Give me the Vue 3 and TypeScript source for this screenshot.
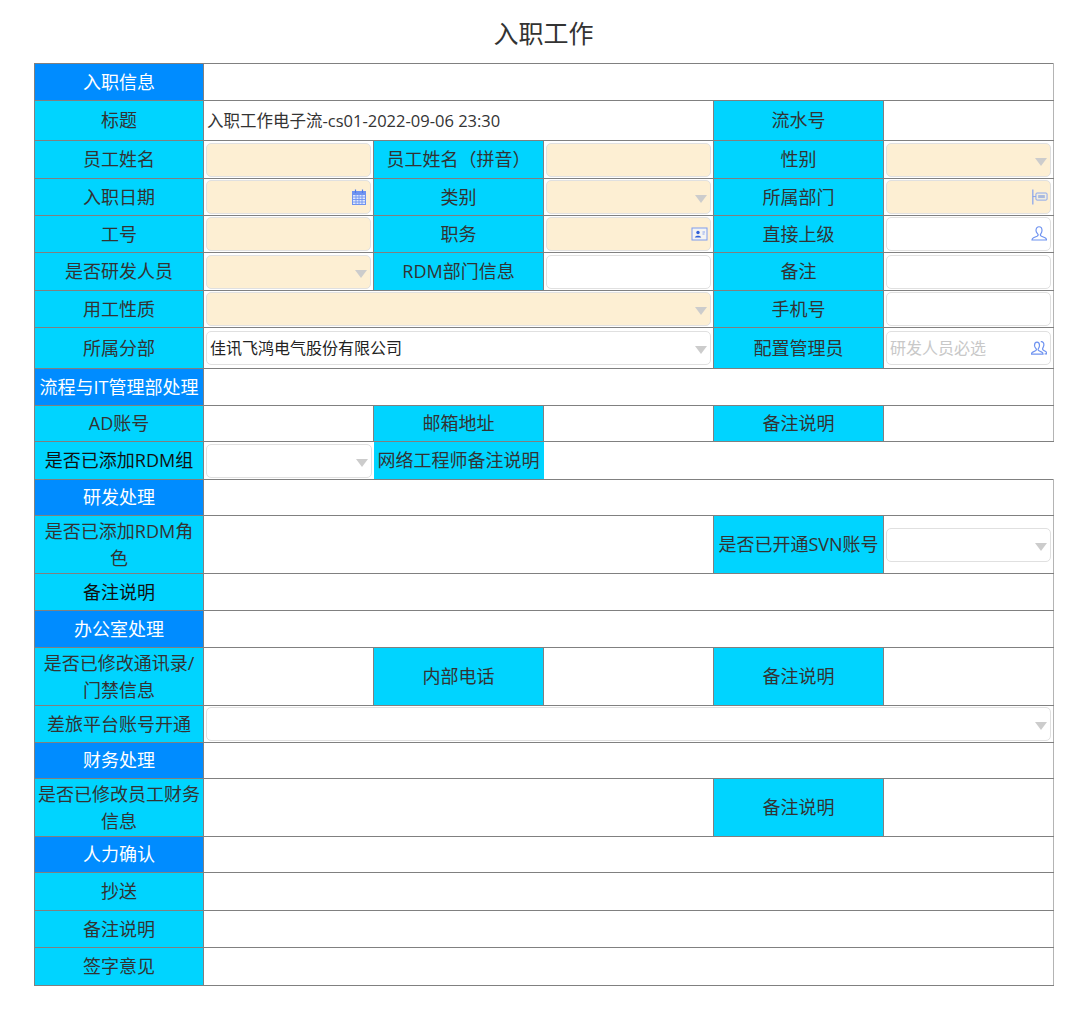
<script setup lang="ts">
type Icon = 'cal' | 'org' | 'card' | 'user' | 'users'
interface Cell {
  kind: 'head' | 'label' | 'text' | 'empty' | 'input' | 'select' | 'note'
  text?: string
  span?: number
  fill?: boolean
  icon?: Icon
  placeholder?: string
  strong?: boolean
  bare?: boolean
}
interface Row { h: number; cells: Cell[] }

const L = (text: string, strong = false): Cell => ({ kind: 'label', text, strong })
const H = (text: string): Cell => ({ kind: 'head', text })
const E = (span = 1): Cell => ({ kind: 'empty', span })
const I = (fill = false, icon?: Icon, placeholder?: string): Cell => ({ kind: 'input', fill, icon, placeholder })
const S = (fill = false, span = 1, text?: string): Cell => ({ kind: 'select', fill, span, text })

const rows: Row[] = [
  { h: 37, cells: [H('入职信息'), E(5)] },
  { h: 40, cells: [L('标题'), { kind: 'text', span: 3, text: '入职工作电子流-cs01-2022-09-06 23:30' }, L('流水号'), E()] },
  { h: 38, cells: [L('员工姓名'), I(true), L('员工姓名（拼音）'), I(true), L('性别'), S(true)] },
  { h: 37, cells: [L('入职日期'), I(true, 'cal'), L('类别'), S(true), L('所属部门'), I(true, 'org')] },
  { h: 37, cells: [L('工号'), I(true), L('职务'), I(true, 'card'), L('直接上级'), I(false, 'user')] },
  { h: 38, cells: [L('是否研发人员'), S(true), L('RDM部门信息'), I(), L('备注'), I()] },
  { h: 37, cells: [L('用工性质'), S(true, 3), L('手机号'), I()] },
  { h: 41, cells: [L('所属分部'), S(false, 3, '佳讯飞鸿电气股份有限公司'), L('配置管理员'), I(false, 'users', '研发人员必选')] },
  { h: 37, cells: [H('流程与IT管理部处理'), E(5)] },
  { h: 36, cells: [L('AD账号'), E(), L('邮箱地址'), E(), L('备注说明'), E()] },
  { h: 38, cells: [L('是否已添加RDM组', true), S(), { kind: 'note', text: '网络工程师备注说明' }] },
  { h: 36, cells: [H('研发处理'), E(5)] },
  { h: 58, cells: [L('是否已添加RDM角色'), E(3), { kind: 'label', text: '是否已开通SVN账号', bare: true }, S()] },
  { h: 37, cells: [L('备注说明', true), E(5)] },
  { h: 37, cells: [H('办公室处理'), E(5)] },
  { h: 58, cells: [L('是否已修改通讯录/门禁信息'), E(), L('内部电话'), E(), L('备注说明'), E()] },
  { h: 37, cells: [L('差旅平台账号开通'), S(false, 5)] },
  { h: 36, cells: [H('财务处理'), E(5)] },
  { h: 58, cells: [L('是否已修改员工财务信息'), E(3), L('备注说明'), E()] },
  { h: 36, cells: [H('人力确认'), E(5)] },
  { h: 38, cells: [L('抄送'), E(5)] },
  { h: 37, cells: [L('备注说明'), E(5)] },
  { h: 38, cells: [L('签字意见'), E(5)] },
]
</script>

<template>
  <div class="page">
    <h1 class="title">入职工作</h1>
    <table class="sheet">
      <colgroup>
        <col class="col first" /><col class="col" /><col class="col" /><col class="col" /><col class="col" /><col class="col" />
      </colgroup>
      <tbody>
        <tr v-for="(row, i) in rows" :key="i" :style="{ height: row.h + 'px' }">
          <td
            v-for="(cell, j) in row.cells"
            :key="j"
            :colspan="cell.span || 1"
            :class="['c-' + cell.kind, { strong: cell.strong, bare: cell.bare, open: row.cells.length === 3 && j === 1 }]"
          >
            <template v-if="cell.kind === 'input' || cell.kind === 'select'">
              <div class="field" :class="{ fill: cell.fill }">
                <span v-if="cell.text" class="value">{{ cell.text }}</span>
                <span v-if="cell.placeholder" class="ph">{{ cell.placeholder }}</span>
                <span v-if="cell.kind === 'select'" class="arrow"></span>
                <svg v-if="cell.icon === 'cal'" class="ico" viewBox="0 0 16 16" fill="none" stroke="#6f93f0">
                  <rect x="1.500" y="2.500" width="13" height="13" fill="#dfe7fb" />
                  <rect x="1.500" y="2.500" width="13" height="3" fill="#6f93f0" />
                  <path d="M4.500 .5v3.500M11.500 .5v3.500" stroke="#4f7ae8" stroke-width="1.200" />
                  <path d="M1.500 8h13M1.500 10.500h13M1.500 13h13M5 6v9M8 6v9M11 6v9" stroke-width=".9" />
                </svg>
                <svg v-else-if="cell.icon === 'org'" class="ico wide" viewBox="0 0 18 18" fill="none" stroke="#7f9fee">
                  <path d="M1.500 0.500v17" stroke-width="1.300" />
                  <path d="M1.500 8.500h3.500" />
                  <rect x="5" y="4.500" width="12.500" height="8" rx="1.200" fill="#f3eee0" />
                  <rect x="7.500" y="6.800" width="7.500" height="3.400" fill="#a9b9de" stroke="none" />
                </svg>
                <svg v-else-if="cell.icon === 'card'" class="ico wide" viewBox="0 0 17 15" fill="none" stroke="#7f9cee">
                  <rect x="1" y="1.500" width="15" height="12" fill="#f4f4f2" />
                  <circle cx="7" cy="6" r="1.700" fill="#2f5fd8" stroke="none" />
                  <path d="M3.800 11c.4-2.200 6-2.200 6.400 0z" fill="#2f5fd8" stroke="none" />
                  <path d="M11.500 5.500h2.500M11.500 7.500h2" stroke-width=".9" />
                </svg>
                <svg v-else-if="cell.icon === 'user'" class="ico" viewBox="0 0 16 16" fill="none" stroke="#6f93f0" stroke-width="1.200">
                  <path d="M5 5c0-5 6-5 6 0 0 2-1 3-1.500 3.800-.3.800 0 1.500 1 2l3.500 1.500c1 .5 1.500 1.300 1.500 2.200H1c0-.9.5-1.700 1.500-2.200L6 10.800c1-.5 1.300-1.200 1-2C6.500 8 5 7 5 5z" transform="translate(0 -.5)" />
                </svg>
                <svg v-else-if="cell.icon === 'users'" class="ico" viewBox="0 0 16 16" fill="none" stroke="#6f93f0" stroke-width="1.200">
                  <path d="M3.500 5c0-4.500 5-4.500 5 0 0 1.800-.9 2.800-1.300 3.500-.3.800 0 1.400 .8 1.800l2.700 1.400c.9.500 1.300 1.200 1.300 2H.5c0-.8.4-1.500 1.300-2l2.700-1.400c.8-.4 1.100-1 .8-1.800C4.900 7.800 3.500 6.800 3.500 5z" transform="translate(0 .4)" />
                  <path d="M9.800 1.300c2.300-.3 3.300 1.500 3 3.700-.2 1.500-1 2.400-1.200 3.200-.1.700.1 1.200.8 1.600l2.300 1.400c.8.500.9 1.300.9 2.200h-2" transform="translate(0 .4)" />
                </svg>
              </div>
            </template>
            <template v-else>{{ cell.text }}</template>
          </td>
        </tr>
      </tbody>
    </table>
  </div>
</template>

<style>
html, body { margin: 0; background: #fff; }
</style>

<style scoped>
.page {
  width: 1080px;
  height: 1011px;
  box-sizing: border-box;
  padding: 0 0 0 34px;
  font-family: "Open Sans", "Noto Sans CJK SC", sans-serif;
  color: #333;
  font-size: 16px;
}
.title {
  margin: 0;
  width: 1019px;
  height: 63px;
  padding-top: 14px;
  box-sizing: border-box;
  line-height: 37px;
  font-size: 25px;
  font-weight: 400;
  text-align: center;
  font-family: "Noto Sans CJK SC", sans-serif;
}
.sheet {
  width: 1019px;
  border-collapse: collapse;
  table-layout: fixed;
}
.col { width: 170px; }
.first { width: 169px; }
td {
  border: 1px solid #808080;
  padding: 0;
  box-sizing: border-box;
  text-align: center;
  line-height: 27px;
}
td:last-child { border-right-color: #b4b4b4; }
.c-head {
  background: #008cff;
  color: #fff;
  font-size: 18px;
  padding: 0 2px;
}
.c-label {
  background: #00d4ff;
  font-size: 18px;
  padding: 0 2px;
}
.strong { color: #111; }
.bare { border-left: none; border-right: none; }
td.c-note {
  background: #00d4ff;
  font-size: 18px;
  border: none;
}
td.open { border-right: none; }
.c-text {
  text-align: left;
  padding-left: 3px;
  font-size: 16.5px;
}
.c-input, .c-select { padding: 0 2px; }
.field {
  position: relative;
  box-sizing: border-box;
  height: 34px;
  display: flex;
  align-items: center;
  background: #fff;
  border: 1px solid #e0e0e0;
  border-radius: 5px;
  text-align: left;
  padding-left: 3px;
}
.fill { background: #fdefd3; }
.value { font-size: 16px; color: #222; }
.ph { font-size: 16px; color: #c8c8c8; }
.arrow {
  position: absolute;
  right: 3px;
  top: calc(50% - 2px);
  width: 0;
  height: 0;
  border-left: 6px solid transparent;
  border-right: 6px solid transparent;
  border-top: 8px solid #ccc;
}
.ico {
  position: absolute;
  right: 3px;
  top: calc(50% - 8px);
  width: 16px;
  height: 16px;
}
.wide { right: 2px; width: 17px; }
</style>
